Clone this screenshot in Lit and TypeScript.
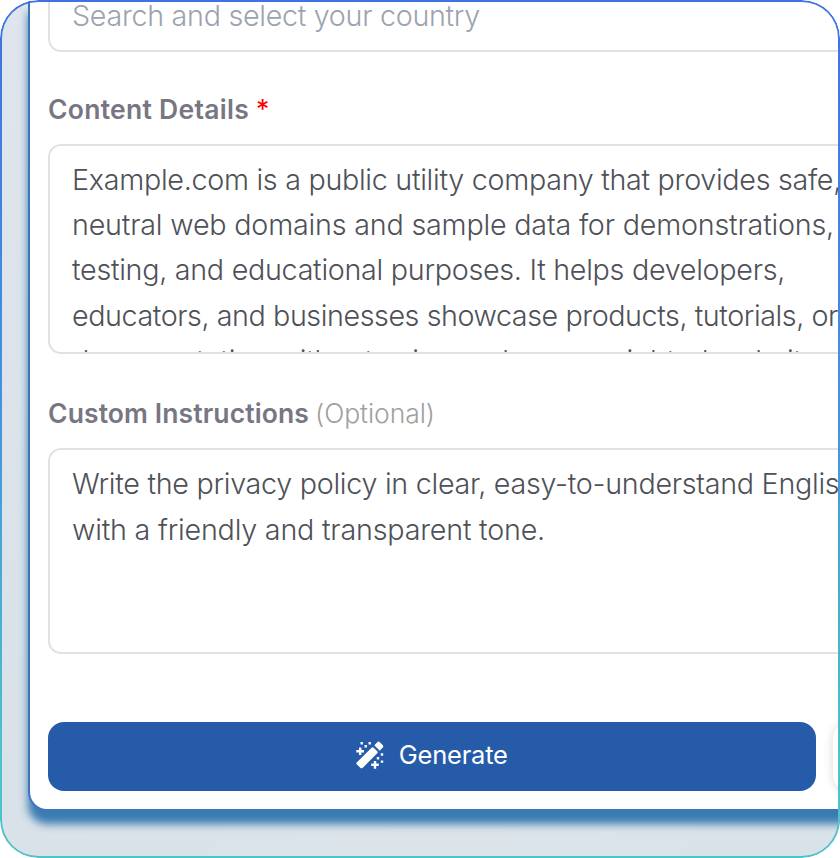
import { LitElement, html, css, svg } from "lit";
import { customElement, property } from "lit/decorators.js";

/** A single line of text whose tracking is adjusted to a set width. */
@customElement("fit-line")
class FitLine extends LitElement {
  @property() text = "";
  @property({ type: Number }) width = 0;

  static styles = css`
    :host { display: block; white-space: pre; }
    span { display: inline-block; }
  `;

  firstUpdated() {
    const span = this.renderRoot.querySelector("span") as HTMLElement;
    const natural = span.getBoundingClientRect().width;
    span.style.letterSpacing = `${(this.width - natural) / this.text.length}px`;
  }

  render() {
    return html`<span>${this.text}</span>`;
  }
}

const wand = svg`
  <path d="M.7 21.6 15.6 6.7a1.5 1.5 0 0 1 2.100 0l3.500 3.500a1.500 1.500 0 0 1 0 2.100L6.800 26.700a1.800 1.800 0 0 1-2.500 0L.7 23.300a1.200 1.200 0 0 1 0-1.700Z"/>
  <path d="m18.300 4.300 3.100-3.100a1.700 1.700 0 0 1 2.400 0l3 3a1.700 1.700 0 0 1 0 2.400l-3.100 3.100Z"/>
  <path d="M3 6.400h2.400v2.700h2.600v2.400H5.400v2.600H3v-2.600H.3V9.100H3ZM17.800 19.900h2.400v2.700h2.600V25h-2.600v2.700h-2.400V25h-2.600v-2.400h2.600Z"/>
  <path d="M4.500 1h2.400v2.400H4.500ZM8.500 4h2.400v2.400H8.500ZM12.500 1h2.400v2.400h-2.400ZM24.800 12.300h2.400v2.400h-2.400ZM20.800 16h2.400v2.400h-2.400ZM24.800 19.400h2.400v2.400h-2.400Z"/>
`;

const details: [string, number][] = [
  ["Example.com is a public utility company that provides safe,", 769],
  ["neutral web domains and sample data for demonstrations,", 762],
  ["testing, and educational purposes. It helps developers,", 713],
  ["educators, and businesses showcase products, tutorials, or", 766],
  ["documentation without using real or copyrighted website", 746],
];
const instructions: [string, number][] = [
  ["Write the privacy policy in clear, easy-to-understand English", 784],
  ["with a friendly and transparent tone.", 473],
];

@customElement("app-root")
class AppRoot extends LitElement {
  static styles = css`
    :host { display: block; height: 858px; font-family: Inter, "Liberation Sans", sans-serif; }
    * { box-sizing: border-box; }
    .frame {
      position: relative; width: 840px; height: 858px; border-radius: 38px; overflow: hidden;
      padding-left: 28px;
      background: linear-gradient(135deg, #dfe5ec, #d9e1e9 45%, #dce4ea 75%, #d9e2e9);
    }
    .outline {
      position: absolute; inset: 0; border-radius: 38px; pointer-events: none;
      border: 2px solid transparent;
      background: linear-gradient(#3d71e4, #4695dc 50%, #4cc2c9 88%) border-box;
      -webkit-mask: linear-gradient(#000 0 0) padding-box exclude, linear-gradient(#000 0 0) border-box;
    }
    .card {
      width: 880px; height: 811px; padding-left: 18px; background: #fff;
      border: solid #3f76bb; border-width: 0 0 2px 2px; border-bottom-left-radius: 19px;
      box-shadow: 0 13px 8px #397bb1;
    }
    .field { width: 840px; border: 2px solid #dee2e7; border-radius: 13px; padding-left: 22px; overflow: hidden; background: #fff; }
    .text { font-size: 28.7px; font-weight: 300; line-height: 45.2px; color: #4e5158; }
    .country { height: 52px; border-top: 0; border-radius: 0 0 13px 13px; }
    .country.text { color: #9ca3af; line-height: 32px; }
    .label { display: flex; align-items: center; font-size: 26.5px; font-weight: 600; line-height: 40px; color: #777683; }
    .first { margin-top: 37px; }
    .second { margin-top: 39px; }
    .star { color: #f00; font-weight: 400; margin-left: 7px; }
    .optional { color: #a0a0a0; font-weight: 300; margin-left: 6px; }
    .details { height: 210px; margin-top: 15px; padding-top: 11px; }
    .instructions { height: 206px; margin-top: 15px; padding-top: 11px; line-height: 45.6px; }
    .actions { display: flex; gap: 17px; margin-top: 67.7px; }
    .button { width: 767.5px; height: 69.4px; border-radius: 16px; flex: none; }
    .generate {
      display: flex; align-items: center; justify-content: center; gap: 15px;
      padding-bottom: 3px;
      background: #255ba9; color: #fff; font-size: 25.5px; font-weight: 400;
    }
    .generate svg { width: 28px; height: 28px; fill: #fff; }
    .next { width: 80px; background: #fff; box-shadow: 0 1px 10px rgba(0, 0, 0, .16); }
  `;

  private lines(list: [string, number][]) {
    return list.map(([t, w]) => html`<fit-line .text=${t} .width=${w}></fit-line>`);
  }

  render() {
    return html`
      <div class="frame">
        <div class="card">
          <div class="field country text">
            <fit-line text="Search and select your country" width="408"></fit-line>
          </div>
          <div class="label first">
            <fit-line text="Content Details" width="201"></fit-line>
            <span class="star">*</span>
          </div>
          <div class="field details text">${this.lines(details)}</div>
          <div class="label second">
            <fit-line text="Custom Instructions" width="261"></fit-line>
            <span class="optional"><fit-line text="(Optional)" width="120"></fit-line></span>
          </div>
          <div class="field instructions text">${this.lines(instructions)}</div>
          <div class="actions">
            <div class="button generate">
              <svg viewBox="0 0 28 28">${wand}</svg>
              <fit-line text="Generate" width="109"></fit-line>
            </div>
            <div class="button next"></div>
          </div>
        </div>
        <div class="outline"></div>
      </div>
    `;
  }
}
